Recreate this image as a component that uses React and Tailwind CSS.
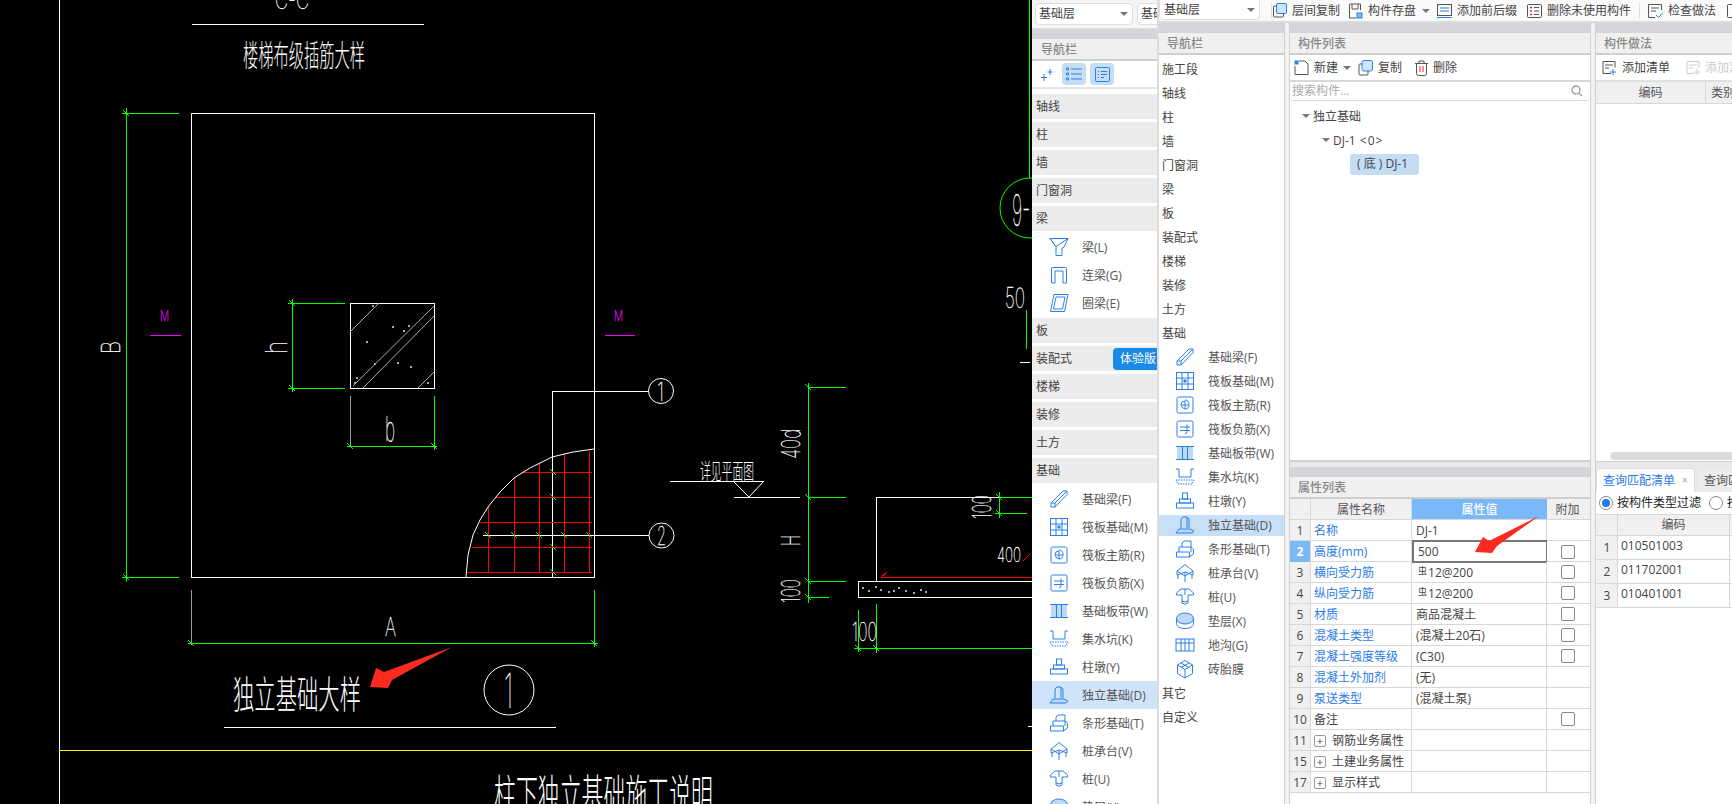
import React from "react";

const GREEN = "#00ff00";
const RED = "#ff0000";
const CAD_FONT = "'Noto Sans CJK SC', sans-serif";
const NUM_FONT = "'Inter', sans-serif";

const CadText = ({ x, y, size, len, rotate, font = CAD_FONT, fill = "#fff", children }) => (
  <text
    x={x}
    y={y}
    fontSize={size}
    fontFamily={font}
    fontWeight={font === NUM_FONT ? 100 : 300}
    fill={fill}
    stroke={font === NUM_FONT ? fill : "none"}
    strokeWidth={font === NUM_FONT ? 0.35 : 0}
    textLength={len}
    lengthAdjust="spacingAndGlyphs"
    transform={rotate ? `rotate(-90 ${x} ${y})` : undefined}
  >
    {children}
  </text>
);

const greenLines = [
  [126, 108, 126, 582], [122, 113, 179, 113], [122, 577, 179, 577],
  [292, 299, 292, 392], [288, 303, 345, 303], [288, 388, 345, 388],
  [347, 446, 437, 446], [434, 396, 434, 450], [188, 643, 598, 643], [594, 590, 594, 647],
  [808, 383, 808, 603], [808, 387, 846, 387], [808, 497, 846, 497], [808, 581, 846, 581], [808, 597, 829, 597],
  [999, 492, 999, 518], [999, 497, 1032, 497], [995, 513, 1027, 513],
  [858, 610, 858, 652], [876, 604, 876, 653], [854, 648, 1032, 648],
  [1029, 0, 1029, 178], [1026, 310, 1026, 349],
];

// the small slashes where a dimension line ends
const greenTicks = [
  [126, 113], [126, 577], [292, 303], [292, 388], [350, 446], [434, 446], [191, 643], [594, 643],
  [808, 387], [808, 497], [808, 581], [808, 597], [999, 497], [999, 513], [858, 648], [876, 648],
  [488, 535], [514, 535], [539, 535], [564, 535], [589, 535], [553, 472], [553, 497], [553, 547], [553, 572],
];

const redLines = [
  [522, 472, 592, 472], [496, 497, 592, 497], [480, 522, 592, 522], [472, 547, 592, 547], [467, 572, 592, 572],
  [488, 507, 488, 572], [514, 478, 514, 572], [539, 463, 539, 572], [564, 454, 564, 572], [589, 451, 589, 572],
  [881, 577, 1032, 577], [881, 577, 887, 572], [1023, 561, 1030, 554],
];

const whiteLines = [
  [59, 0, 59, 804], [192, 24, 424, 24], [552, 391, 648, 391], [552, 391, 552, 577],
  [483, 535, 649, 535], [670, 481, 764, 481], [734, 497, 800, 497],
  [876, 497, 1032, 497], [876, 497, 876, 581], [224, 727, 556, 727], [1020, 362, 1030, 362], [1028, 726, 1032, 726],
];

const specks = [
  [862, 587], [868, 590], [875, 586], [880, 589], [888, 591], [893, 590], [898, 587], [905, 590], [913, 592], [920, 589], [925, 591],
  [372, 305], [392, 326], [408, 325], [403, 330], [366, 341], [374, 363], [397, 362], [410, 366], [354, 382], [356, 377], [427, 382],
];

// the CAD sheet on the left, it's a drawing so it stays a single svg
const CadDrawing = () => (
  <svg width="1032" height="804" viewBox="0 0 1032 804" className="block shrink-0 bg-black">
    <g shapeRendering="crispEdges">
      {whiteLines.map(([a, b, c, d], i) => (
        <line key={i} x1={a} y1={b} x2={c} y2={d} stroke="#fff" strokeWidth="1" />
      ))}
      <rect x="191.5" y="113.5" width="403" height="464" fill="none" stroke="#fff" />
      <rect x="350.5" y="303.5" width="84" height="85" fill="none" stroke="#fff" />
      <rect x="858.5" y="581.5" width="200" height="16" fill="none" stroke="#fff" />
      <line x1="191" y1="590" x2="191" y2="645" stroke="#999" />
      <line x1="350" y1="396" x2="350" y2="446" stroke="#999" />
      {greenLines.map(([a, b, c, d], i) => (
        <line key={i} x1={a} y1={b} x2={c} y2={d} stroke={GREEN} strokeWidth="1" />
      ))}
      {redLines.map(([a, b, c, d], i) => (
        <line key={i} x1={a} y1={b} x2={c} y2={d} stroke={RED} strokeWidth="1" />
      ))}
      <line x1="150" y1="335" x2="181" y2="335" stroke="#ff00ff" />
      <line x1="605" y1="335" x2="635" y2="335" stroke="#ff00ff" />
      <line x1="59" y1="750" x2="1032" y2="750" stroke="#ffff00" />
      {specks.map(([x, y], i) => (
        <rect key={i} x={x} y={y} width="2" height="2" fill="#aaa" />
      ))}
    </g>

    <path d="M733 481 749 497 764 481" fill="none" stroke="#fff" />
    <g stroke={GREEN}>
      {greenTicks.map(([x, y], i) => (
        <line key={i} x1={x - 3} y1={y - 3} x2={x + 3} y2={y + 3} />
      ))}
    </g>

    {/* hatch inside the column */}
    <g stroke="#aaa" fill="none">
      <line x1="350" y1="332" x2="379" y2="303" />
      <line x1="353" y1="386" x2="434" y2="306" />
      <line x1="363" y1="388" x2="434" y2="316" />
      <line x1="418" y1="388" x2="434" y2="372" />
    </g>

    <polyline
      points="466,577 468,555 473,535 480,520 488,507 500,492 514,478 530,468 552,457 573,452 594,449"
      fill="none"
      stroke="#fff"
    />
    <ellipse cx="661" cy="391" rx="12.5" ry="12.5" fill="none" stroke="#fff" />
    <ellipse cx="661.5" cy="535.5" rx="12.5" ry="12.5" fill="none" stroke="#fff" />
    <ellipse cx="509" cy="690" rx="25" ry="25" fill="none" stroke="#fff" />
    <ellipse cx="1030" cy="208" rx="30" ry="30" fill="none" stroke={GREEN} />
    <polygon points="370,687 376,668 384,672 452,647 392,680 388,688" fill="#ff2a1f" />

    <CadText x={275} y={9} size={24} len={34} font={NUM_FONT}>C-C</CadText>
    <CadText x={243} y={66} size={30} len={122}>楼梯布级插筋大样</CadText>
    <CadText x={233} y={708} size={38} len={128}>独立基础大样</CadText>
    <CadText x={494} y={812} size={44} len={219}>柱下独立基础施工说明</CadText>
    <CadText x={700} y={479} size={22} len={54}>详见平面图</CadText>
    <CadText x={120} y={354} size={26} len={13} rotate font={NUM_FONT}>B</CadText>
    <CadText x={287} y={354} size={30} len={13} rotate font={NUM_FONT}>h</CadText>
    <CadText x={385} y={441} size={34} len={10} font={NUM_FONT}>b</CadText>
    <CadText x={385} y={636} size={26} len={11} font={NUM_FONT}>A</CadText>
    <CadText x={160} y={321} size={15} len={9} font={NUM_FONT} fill="#ff00ff">M</CadText>
    <CadText x={614} y={321} size={15} len={9} font={NUM_FONT} fill="#ff00ff">M</CadText>
    <CadText x={657} y={401} size={26} len={7} font={NUM_FONT}>1</CadText>
    <CadText x={657} y={545} size={26} len={9} font={NUM_FONT}>2</CadText>
    <CadText x={504} y={708} size={48} len={9} font={NUM_FONT}>1</CadText>
    <CadText x={800} y={459} size={26} len={30} rotate font={NUM_FONT}>40d</CadText>
    <CadText x={800} y={546} size={26} len={11} rotate font={NUM_FONT}>H</CadText>
    <CadText x={800} y={603} size={26} len={24} rotate font={NUM_FONT}>100</CadText>
    <CadText x={991} y={519} size={26} len={24} rotate font={NUM_FONT}>100</CadText>
    <CadText x={997} y={562} size={20} len={24} font={NUM_FONT}>400</CadText>
    <CadText x={852} y={641} size={26} len={25} font={NUM_FONT}>100</CadText>
    <CadText x={1005} y={308} size={28} len={20} font={NUM_FONT}>50</CadText>
    <CadText x={1012} y={226} size={44} len={18} font={NUM_FONT}>9-</CadText>
  </svg>
);

const LIGHT = "#bcd9f8";

// component type icons, drawn on a 20x20 box
const icons = {
  beam: <><path d="M1 1.500h18l-4 8.500-2 1v7.500H7V9.500Z" /><path d="M7 9.500 19 1.500M1 1.500 7 9.500" /></>,
  link: <path d="M2.500 18V3.500q0-1 1-1h13q1 0 1 1V18h-3.500V6h-8v12Z" />,
  ring: <><path d="M5 1.500h14l-3.500 17h-14Z" /><path d="M7 4h9l-2.500 12h-9Z" /></>,
  foundBeam: <><path d="M2 14 14 2h4v3.500L6 18H2Z" /><path d="M2 14h4v4M6 14 18 2" /></>,
  raft: <><rect x="1.500" y="1.500" width="17" height="17" /><path d="M1.500 7h17M1.500 13h17M7 1.500v17M13 1.500v17" /><rect x="8.500" y="8.500" width="3" height="3" fill="#2b80e6" stroke="none" /></>,
  raftMain: <><rect x="2" y="2" width="16" height="16" rx="1.500" /><path d="M10 5q4 0 4 4.500T10 14q-4-1-4-4.500T10 6v8M6 10h8" /></>,
  raftNeg: <><rect x="2" y="2" width="16" height="16" rx="1.500" /><path d="M5 8h10M5 11.500h10M12 5.500v7q0 2-2 2.500" /></>,
  strip: <><rect x="2" y="4" width="16" height="12" fill={LIGHT} stroke="none" /><path d="M1 3.500h18M1 16.500h18M7.500 3.500v13M12.500 3.500v13" /></>,
  pit: <><path d="M1 2h3v8h12V2h3" /><path d="M1 13h18l-2 4H3Z" strokeDasharray="1.500 1" /></>,
  pier: <><rect x="7.500" y="2" width="5" height="6" /><rect x="4.500" y="8" width="11" height="4" /><rect x="1.500" y="12" width="17" height="5" /></>,
  isolated: <><path d="M6 13V4l2-2h4v11M12 2l2 2v9" fill="none" /><path d="M1 18l3-4h11l4 2-2 2Z" fill={LIGHT} /></>,
  stripFound: <><path d="M7 8V4l2-2h7v6" /><path d="M4 13V8h12v5" /><path d="M1.500 13h13v5h-13ZM14.500 18l4-3v-5l-2.500-2" /></>,
  cap: <><path d="M10 1.500 18 8v4l-8-3-8 3V8Z" /><path d="M10 9v10M3 12v4M17 12v4M2 8l8 5 8-5" /></>,
  pile: <><path d="M1.500 6 6 2h8l4.500 4v2H13v8q-3 2.500-6 0V8H1.500Z" /><path d="M7 14q3 2 6 0M10 2v6" /></>,
  cushion: <><ellipse cx="10" cy="7.500" rx="8.500" ry="5.500" fill={LIGHT} /><path d="M1.500 7.500v5c0 3 3.500 5 8.500 5s8.500-2 8.500-5v-5" /></>,
  trench: <><rect x="1" y="4" width="18" height="12" /><path d="M1 8h18M6 4v12M10 4v12M14 4v12" /></>,
  tire: <><path d="M10 1.500 17.500 6v8.500L10 19l-7.500-4.500V6Z" /><path d="M2.500 6 10 10.500 17.500 6M10 10.500V19M6 4l8 4.500M14 4 6 8.500" /></>,
};

const Icon = ({ name, size = 20 }) => (
  <svg width={size} height={size} viewBox="0 0 20 20" fill="none" stroke="#2b80e6" strokeWidth="1" className="shrink-0">
    {icons[name]}
  </svg>
);

const beamItems = [
  ["beam", "梁(L)"],
  ["link", "连梁(G)"],
  ["ring", "圈梁(E)"],
];

const foundationItems = [
  ["foundBeam", "基础梁(F)"],
  ["raft", "筏板基础(M)"],
  ["raftMain", "筏板主筋(R)"],
  ["raftNeg", "筏板负筋(X)"],
  ["strip", "基础板带(W)"],
  ["pit", "集水坑(K)"],
  ["pier", "柱墩(Y)"],
  ["isolated", "独立基础(D)"],
  ["stripFound", "条形基础(T)"],
  ["cap", "桩承台(V)"],
  ["pile", "桩(U)"],
  ["cushion", "垫层(X)"],
  ["trench", "地沟(G)"],
  ["tire", "砖胎膜"],
];

const Caret = () => (
  <span className="block h-0 w-0 border-x-[4px] border-t-[4px] border-x-transparent border-t-[#777]" />
);

const PanelHead = ({ title, pad = "pl-2" }) => (
  <>
    <div className="h-[10px] bg-[#d3d5d9]" />
    <div className={`flex h-[22px] items-center border-b-2 border-[#cfcfcf] bg-[#f0f0f0] pt-px text-[12px] font-medium text-[#888] ${pad}`}>
      {title}
    </div>
  </>
);

const NavItem = ({ icon, label, active }) => (
  <div className={`flex h-[28px] items-center gap-[13px] pl-[17px] text-[12px] text-[#555] ${active ? "bg-[#cfe4fb]" : ""}`}>
    <Icon name={icon} />
    <span className="whitespace-nowrap pt-px">{label}</span>
  </div>
);

const Category = ({ label, badge }) => (
  <div className="mb-[3px] flex h-[25px] items-center justify-between bg-[#ececec] pl-[4px] text-[12px] text-[#444]">
    <span className="pt-px">{label}</span>
    {badge && (
      <span className="flex h-[22px] w-[44px] items-center overflow-hidden rounded-l-[4px] bg-[#1a8ae8] pl-[7px] whitespace-nowrap text-white">
        {badge}
      </span>
    )}
  </div>
);

const FloorSelect = ({ className = "" }) => (
  <div className={`flex items-center justify-between rounded-[4px] border border-[#ddd] bg-white pl-[3px] pr-[4px] text-[12px] text-[#444] ${className}`}>
    <span>基础层</span>
    <Caret />
  </div>
);

// first navigation panel, the expanded tree view
const NavPanelWide = () => (
  <div className="h-full w-[125px] shrink-0 overflow-hidden bg-white">
    <div className="flex h-[29px] items-center gap-[4px] border-b border-[#ddd] bg-[#f5f5f5] pl-[3px]">
      <FloorSelect className="h-[22px] w-[98px] shrink-0" />
      <div className="flex h-[22px] w-[40px] shrink-0 items-center overflow-hidden rounded-l-[4px] border border-[#ddd] bg-white pl-[3px] text-[12px] whitespace-nowrap text-[#444]">
        基础层
      </div>
    </div>
    <PanelHead title="导航栏" pad="pl-[9px]" />
    <div className="relative flex h-[28px] items-center gap-[4px] border-b-2 border-[#e4e4e4] pl-[30px]">
      <svg width="14" height="14" viewBox="0 0 14 14" stroke="#2b80e6" fill="none" className="absolute left-[8px] top-[7px]">
        <path d="M4 6v7M1 9.500h6M10 1v6M7.500 4h5" />
      </svg>
      <span className="flex h-[22px] w-[24px] items-center justify-center rounded-[4px] bg-[#c5dcf5]">
        <svg width="16" height="14" viewBox="0 0 16 14" stroke="#2b80e6" fill="none">
          <path d="M5 2h11M5 7h11M5 12h11M0.500 1h2v2h-2zM0.500 6h2v2h-2zM0.500 11h2v2h-2z" />
        </svg>
      </span>
      <span className="flex h-[22px] w-[24px] items-center justify-center rounded-[4px] bg-[#c5dcf5]">
        <svg width="15" height="15" viewBox="0 0 15 15" stroke="#2b80e6" fill="none">
          <rect x="0.500" y="0.500" width="14" height="14" rx="1" />
          <path d="M3 4.500h1M6 4.500h6M3 7.500h1M6 7.500h6M3 10.500h1M6 10.500h3" />
        </svg>
      </span>
    </div>
    <div className="pt-[5px]">
      <Category label="轴线" />
      <Category label="柱" />
      <Category label="墙" />
      <Category label="门窗洞" />
      <Category label="梁" />
      <div className="-mt-px mb-px">
        {beamItems.map(([icon, label]) => (
          <NavItem key={label} icon={icon} label={label} />
        ))}
      </div>
      <Category label="板" />
      <Category label="装配式" badge="体验版" />
      <Category label="楼梯" />
      <Category label="装修" />
      <Category label="土方" />
      <Category label="基础" />
      <div className="-mt-px">
        {foundationItems.slice(0, 12).map(([icon, label]) => (
          <NavItem key={label} icon={icon} label={label} active={label === "独立基础(D)"} />
        ))}
      </div>
    </div>
  </div>
);

const navPlain = ["施工段", "轴线", "柱", "墙", "门窗洞", "梁", "板", "装配式", "楼梯", "装修", "土方", "基础"];

// second navigation panel, narrower row height
const NavPanelSlim = () => (
  <div className="h-full w-[125px] shrink-0 overflow-hidden bg-white">
    <PanelHead title="导航栏" />
    <div className="pt-[2px] text-[12px] text-[#444]">
      {navPlain.map((label) => (
        <div key={label} className="flex h-[24px] items-center pl-[3px] pt-px">{label}</div>
      ))}
      {foundationItems.map(([icon, label]) => (
        <div key={label} className="flex h-[24px] items-center">
          <div className={`flex h-[21px] w-full items-center gap-[13px] pl-[16px] text-[#555] ${label === "独立基础(D)" ? "bg-[#c8dff8]" : ""}`}>
            <Icon name={icon} />
            <span className="whitespace-nowrap pt-px">{label}</span>
          </div>
        </div>
      ))}
      <div className="flex h-[24px] items-center pl-[3px] pt-px">其它</div>
      <div className="flex h-[24px] items-center pl-[3px] pt-px">自定义</div>
    </div>
  </div>
);

const ToolIcon = ({ children }) => (
  <svg width="15" height="16" viewBox="0 0 15 16" fill="none" stroke="#555" strokeWidth="1" className="shrink-0">
    {children}
  </svg>
);

const TopToolbar = () => (
  <div className="flex h-[23px] items-center overflow-hidden border-b-2 border-[#dcdcdc] bg-[#fafafa] text-[12px] whitespace-nowrap text-[#444]">
    <FloorSelect className="-mt-[2px] h-[21px] w-[101px] shrink-0 rounded-t-none pl-[4px]" />
    <span className="ml-[11px] h-[16px] w-px shrink-0 bg-[#ddd]" />
    <div className="flex items-center gap-[5px]">
      <ToolIcon>
        <rect x="4.500" y="0.500" width="10" height="10" rx="1.500" fill="#cfe4fb" stroke="#2b80e6" />
        <path d="M4 3H2.500q-1 0-1 1v9q0 1 1 1h8q1 0 1-1v-2" stroke="#555" />
      </ToolIcon>
      <span>层间复制</span>
    </div>
    <div className="ml-[8px] flex items-center gap-[5px]">
      <ToolIcon>
        <path d="M1.500 15V2q0-1 1-1h10v6M1.500 15H8M4 1v5h6V1" />
        <rect x="9" y="10" width="5" height="5" fill="#7bb8f8" stroke="#2b80e6" />
      </ToolIcon>
      <span>构件存盘</span>
      <span className="ml-px"><Caret /></span>
    </div>
    <div className="ml-[7px] flex items-center gap-[5px]">
      <ToolIcon>
        <rect x="0.500" y="1.500" width="14" height="11" stroke="#555" />
        <path d="M3 5h9M3 8h9M0 14.500h15" stroke="#2b80e6" />
      </ToolIcon>
      <span>添加前后缀</span>
    </div>
    <div className="ml-[10px] flex items-center gap-[5px]">
      <ToolIcon>
        <rect x="0.500" y="1.500" width="14" height="13" rx="1" />
        <path d="M3 4.500h2M3 8h2M3 11.500h2" stroke="#e02828" strokeWidth="1.500" />
        <path d="M7 4.500h5M7 8h5M7 11.500h5" />
      </ToolIcon>
      <span>删除未使用构件</span>
    </div>
    <span className="ml-[8px] h-[16px] w-px shrink-0 bg-[#ddd]" />
    <div className="ml-[8px] flex items-center gap-[5px]">
      <ToolIcon>
        <path d="M13.500 7V1.500h-13v13H7M3 5h8M3 8h5" />
        <path d="M8 12l2.500 2.500L15 9.500" stroke="#2b80e6" />
      </ToolIcon>
      <span>检查做法</span>
    </div>
    <div className="ml-[11px]">
      <ToolIcon><rect x="0.500" y="1.500" width="14" height="13" rx="1" /></ToolIcon>
    </div>
  </div>
);

const propRows = [
  { no: 1, name: "名称", value: "DJ-1", link: true },
  { no: 2, name: "高度(mm)", value: "500", link: true, check: true, active: true },
  { no: 3, name: "横向受力筋", value: "12@200", link: true, check: true, bar: true },
  { no: 4, name: "纵向受力筋", value: "12@200", link: true, check: true, bar: true },
  { no: 5, name: "材质", value: "商品混凝土", link: true, check: true },
  { no: 6, name: "混凝土类型", value: "(混凝土20石)", link: true, check: true },
  { no: 7, name: "混凝土强度等级", value: "(C30)", link: true, check: true },
  { no: 8, name: "混凝土外加剂", value: "(无)", link: true },
  { no: 9, name: "泵送类型", value: "(混凝土泵)", link: true },
  { no: 10, name: "备注", value: "", check: true },
  { no: 11, name: "钢筋业务属性", value: "", group: true },
  { no: 15, name: "土建业务属性", value: "", group: true },
  { no: 17, name: "显示样式", value: "", group: true },
];

const PropRow = ({ row }) => (
  <div className="grid h-[21px] grid-cols-[21px_101px_135px_41px] border-b border-[#d8d8d8] text-[12px] text-[#444]">
    <div className={`flex items-center justify-center border-r border-[#d8d8d8] pt-px ${row.active ? "bg-[#7bb8f8] font-bold text-white" : "bg-[#f0f0f0]"}`}>
      {row.no}
    </div>
    <div className={`flex items-center overflow-hidden whitespace-nowrap border-r border-[#d8d8d8] pl-[3px] pt-px ${row.link ? "text-[#2b7be8]" : ""}`}>
      {row.group && (
        <span className="mr-[6px] flex h-[12px] w-[12px] shrink-0 items-center justify-center rounded-[2px] border border-[#999] text-[11px] leading-none">+</span>
      )}
      {row.name}
    </div>
    <div className={`flex items-center whitespace-nowrap border-r pl-[4px] pt-px ${row.active ? "-my-px border-2 border-[#777] pl-[3px]" : "border-[#d8d8d8]"}`}>
      {row.bar && <span className="mb-[4px] ml-[2px] mr-px text-[9px] leading-none">虫</span>}
      {row.value}
    </div>
    <div className="flex items-center justify-center">
      {row.check && <span className="h-[14px] w-[14px] rounded-[2px] border border-[#888] bg-white" />}
    </div>
  </div>
);

const MiddlePanel = () => (
  <div className="flex h-full w-[300px] shrink-0 flex-col">
    <div className="flex h-[439px] shrink-0 flex-col border-b-2 border-[#d0d0d0] bg-white">
      <PanelHead title="构件列表" />
      <div className="flex h-[27px] items-center border-b-2 border-[#d8d8d8] pl-[4px] text-[12px] text-[#444]">
        <svg width="15" height="16" viewBox="0 0 15 16" fill="none" stroke="#555" className="shrink-0">
          <path d="M1 6v8.500h13V4l-3-3H5" />
          <rect x="0.500" y="0.500" width="4" height="4" fill="#2b80e6" stroke="none" />
        </svg>
        <span className="ml-[5px]">新建</span>
        <span className="ml-[5px]"><Caret /></span>
        <svg width="15" height="16" viewBox="0 0 15 16" fill="none" className="ml-[7px] shrink-0">
          <rect x="4" y="0.500" width="10.500" height="10.500" rx="2" fill="#cfe4fb" stroke="#2b80e6" />
          <path d="M4 4H2q-1 0-1 1v9q0 1 1 1h7q1 0 1-1v-3" stroke="#555" />
        </svg>
        <span className="ml-[5px]">复制</span>
        <svg width="13" height="16" viewBox="0 0 13 16" fill="none" stroke="#555" className="ml-[13px] shrink-0">
          <path d="M1.500 3.500v10q0 2 2 2h6q2 0 2-2v-10M0 3.500h13M4 3.500V1h5v2.500" />
          <path d="M5 6v6M8 6v6" stroke="#e02828" />
        </svg>
        <span className="ml-[5px]">删除</span>
      </div>
      <div className="relative flex h-[19px] items-center rounded-[3px] border-b border-[#d8d8d8] pl-[2px] text-[12px] text-[#aaa]">
        搜索构件...
        <svg width="12" height="12" viewBox="0 0 12 12" fill="none" stroke="#999" strokeWidth="1.300" className="absolute right-[7px] top-[3px]">
          <circle cx="5" cy="5" r="4" />
          <path d="M8 8l3 3" />
        </svg>
      </div>
      <div className="pt-[3px] text-[12px] text-[#444]">
        <div className="flex h-[24px] items-center pl-[12px]">
          <Caret />
          <span className="ml-[3px] pt-px">独立基础</span>
        </div>
        <div className="flex h-[24px] items-center pl-[32px]">
          <Caret />
          <span className="ml-[3px] pt-px">DJ-1 <span className="ml-px tracking-[1px]">&lt;0&gt;</span></span>
        </div>
        <div className="flex h-[24px] items-center pl-[60px]">
          <span className="flex h-[21px] w-[69px] items-center rounded-[3px] bg-[#c5dcf5] pl-[7px] whitespace-nowrap">( 底 ) DJ-1</span>
        </div>
      </div>
    </div>
    <div className="h-[5px] shrink-0" />
    <div className="flex-1 overflow-hidden bg-white">
      <PanelHead title="属性列表" />
      <div className="grid h-[21px] grid-cols-[21px_101px_135px_41px] items-stretch border-b border-[#d8d8d8] bg-[#f0f0f0] text-center text-[12px] text-[#555]">
        <div className="border-r border-[#d8d8d8]" />
        <div className="flex items-center justify-center border-r border-[#d8d8d8] pt-px">属性名称</div>
        <div className="flex items-center justify-center bg-[#7bb8f8] pt-px font-medium text-white">属性值</div>
        <div className="flex items-center justify-center pt-px">附加</div>
      </div>
      {propRows.map((row) => (
        <PropRow key={row.no} row={row} />
      ))}
    </div>
  </div>
);

const queryRows = [
  ["1", "010501003"],
  ["2", "011702001"],
  ["3", "010401001"],
];

const RightPanel = () => (
  <div className="flex h-full w-[136px] shrink-0 flex-col overflow-hidden">
    <div className="flex h-[439px] shrink-0 flex-col border-b border-[#d0d0d0] bg-white">
      <PanelHead title="构件做法" />
      <div className="flex h-[27px] items-center overflow-hidden border-b-2 border-[#e0e0e0] pl-[6px] text-[12px] whitespace-nowrap text-[#444]">
        <svg width="15" height="15" viewBox="0 0 15 15" fill="none" stroke="#555" className="shrink-0">
          <path d="M9 13.500H1V1.500h12v6M3 5h8M3 8h4" />
          <path d="M11 9v6M8 12h6" stroke="#2b80e6" />
        </svg>
        <span className="ml-[5px]">添加清单</span>
        <svg width="15" height="15" viewBox="0 0 15 15" fill="none" stroke="#ccc" className="ml-[16px] shrink-0">
          <path d="M9 13.500H1V1.500h12v6M3 5h8M3 8h4M11 9v6M8 12h6" />
        </svg>
        <span className="ml-[4px] text-[#ccc]">添加定额</span>
      </div>
      <div className="grid h-[22px] grid-cols-[110px_26px] border-b border-[#d8d8d8] bg-[#f0f0f0] text-[12px] text-[#555]">
        <div className="flex items-center justify-center border-r border-[#d8d8d8] pt-px">编码</div>
        <div className="flex items-center overflow-hidden whitespace-nowrap pl-[5px] pt-px">类别</div>
      </div>
      <div className="flex-1" />
      <div className="mb-px ml-[14px] h-[8px] rounded-l-[4px] bg-[#dcdcdc]" />
    </div>
    <div className="h-[6px] shrink-0" />
    <div className="flex h-[24px] shrink-0 items-end text-[12px] whitespace-nowrap">
      <div className="flex h-[24px] w-[99px] items-center justify-between rounded-t-[4px] border border-b-0 border-[#ddd] bg-white px-[6px] text-[#2b7be8]">
        查询匹配清单
        <span className="text-[11px] text-[#aaa]">×</span>
      </div>
      <div className="ml-[3px] flex h-[22px] flex-1 items-center overflow-hidden rounded-t-[4px] bg-[#ececec] pl-[6px] text-[#555]">查询匹配</div>
    </div>
    <div className="flex-1 bg-white">
      <div className="flex h-[22px] items-center overflow-hidden pl-[3px] text-[12px] whitespace-nowrap text-[#222]">
        <span className="flex h-[14px] w-[14px] shrink-0 items-center justify-center rounded-full border border-[#888]">
          <span className="h-[8px] w-[8px] rounded-full bg-[#1a7de8]" />
        </span>
        <span className="ml-[4px]">按构件类型过滤</span>
        <span className="ml-[8px] h-[14px] w-[14px] shrink-0 rounded-full border border-[#888]" />
        <span className="ml-[4px]">按</span>
      </div>
      <div className="grid h-[22px] grid-cols-[21px_112px] border-y border-[#d8d8d8] bg-[#f0f0f0] pl-px text-[12px] text-[#555]">
        <div className="border-r border-[#d8d8d8]" />
        <div className="flex items-center justify-center border-r border-[#d8d8d8]">编码</div>
      </div>
      {queryRows.map(([no, code]) => (
        <div key={no} className="grid h-[24px] grid-cols-[21px_112px] border-b border-[#d8d8d8] pl-px text-[12px] text-[#444]">
          <div className="flex items-center justify-center border-r border-[#d8d8d8] bg-[#f0f0f0]">{no}</div>
          <div className="flex items-center border-r border-[#d8d8d8] pb-[3px] pl-[3px]">{code}</div>
        </div>
      ))}
    </div>
  </div>
);

const App = () => (
  <div
    lang="zh-CN"
    className="relative flex h-[804px] w-[1732px] overflow-hidden bg-black font-['Open_Sans','Noto_Sans_CJK_SC',sans-serif]"
  >
    <CadDrawing />
    <NavPanelWide />
    <div className="h-full w-[2px] shrink-0 bg-[#dcdcdc]" />
    <div className="flex h-full w-[573px] shrink-0 flex-col bg-[#e9e9e9]">
      <TopToolbar />
      <div className="flex min-h-0 flex-1">
        <NavPanelSlim />
        <div className="h-full w-[6px] shrink-0 border-x border-[#cfcfcf] bg-[#f2f2f2]" />
        <MiddlePanel />
        <div className="h-full w-[6px] shrink-0 border-x border-[#cfcfcf] bg-[#f2f2f2]" />
        <RightPanel />
      </div>
    </div>
    {/* red annotation arrow sits over the property table */}
    <svg width="1732" height="804" className="pointer-events-none absolute left-0 top-0">
      <polygon points="1475,552 1483,537 1489,541 1539,516 1497,546 1492,553" fill="#ff2a1f" />
    </svg>
  </div>
);

export default App;
